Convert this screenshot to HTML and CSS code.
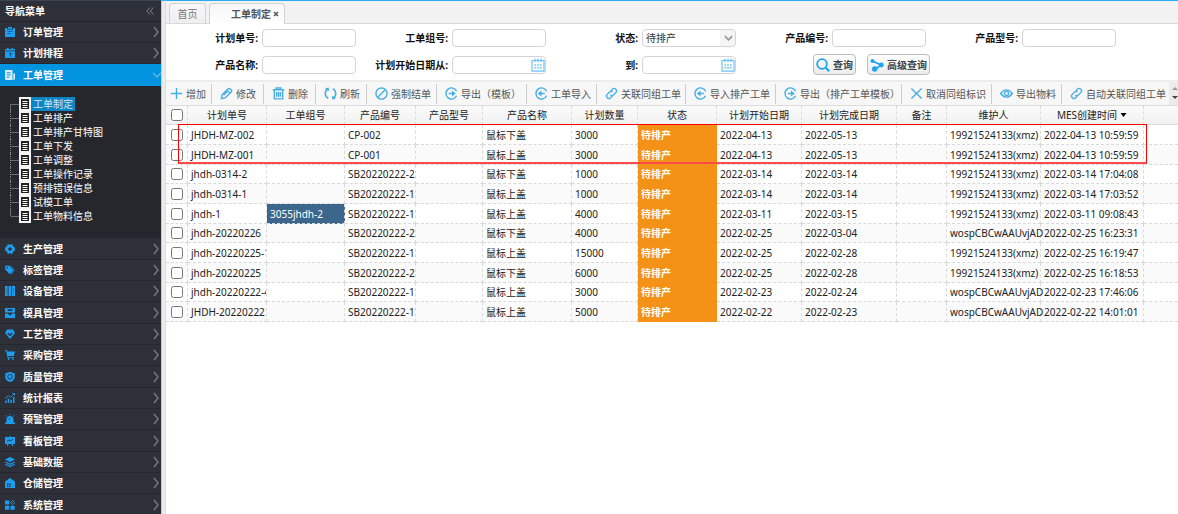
FILE: index.html
```html
<!DOCTYPE html>
<html lang="zh-CN">
<head>
<meta charset="utf-8">
<title>工单制定</title>
<link rel="stylesheet" href="styles.css">
</head>
<body>
<svg class="sprite" aria-hidden="true">
  <symbol id="chev" viewBox="0 0 6 12"><path d="M1 1l4 5-4 5" fill="none" stroke="currentColor" stroke-width="1.5"/></symbol>
  <symbol id="doc" viewBox="0 0 12 14"><rect x="1" y="1" width="10" height="12" fill="#222" stroke="#f4f4f4" stroke-width="2"/><path d="M3.500 4.500h5M3.500 6.500h5M3.500 8.500h5M3.500 10.500h5" stroke="#fff" stroke-width="1"/></symbol>
  <symbol id="m-order" viewBox="0 0 10 10"><path d="M0 1h2v1.500h6V1h2v9H0z"/><path d="M3 0h4v1.800H3z"/><path d="M2.500 4.500h5M2.500 6.500h3" stroke="#17608f" stroke-width=".9"/></symbol>
  <symbol id="m-plan" viewBox="0 0 10 10"><path d="M0 1h2V0h1.500v1h3V0H8v1h2v1.500H0zM0 3.300h10V10H0z"/><path d="M4 5h1.300v3.500M6.500 5.500h1" fill="none" stroke="#17476a" stroke-width="1"/></symbol>
  <symbol id="m-work" viewBox="0 0 10 10"><path d="M0 0h7.500v10H1.200Q0 10 0 8.800zM8.300 3.500H10v5Q10 10 8.300 10z"/><path d="M1.700 2.800h4M1.700 5h4M1.700 7.200h2.500" stroke="#1593da" stroke-width="1"/></symbol>
  <symbol id="m-gear" viewBox="0 0 10 10"><path fill-rule="evenodd" d="M3.500 0l1.500.9L6.500 0l1.300.8v1.500l1.700.7.5 2-.5 2-1.700.7v1.500L6.500 10 5 9.100 3.500 10l-1.300-.8V7.700L.5 7 0 5l.5-2 1.700-.7V.8zM5 3.200A1.800 1.800 0 1 0 5 6.800 1.800 1.800 0 1 0 5 3.200z"/></symbol>
  <symbol id="m-tag" viewBox="0 0 10 10"><path d="M0 .8L4 .5l4.500 4.700-3.700 4L.3 4.500z"/><path d="M5.500.8l4 4.200-3.300 4.300" fill="none" stroke="currentColor" stroke-width=".8"/><circle cx="2.200" cy="2.600" r=".8" fill="#2e3039"/></symbol>
  <symbol id="m-device" viewBox="0 0 10 10"><path d="M0 0h2.700v10H0zM3.500 0h2.700v10H3.500zM7 0h3v10H7z"/><path d="M1.350 2v6M8.500 2v6" stroke="#1974a9" stroke-width=".7"/></symbol>
  <symbol id="m-mold" viewBox="0 0 10 10"><path d="M0 0h10v4.500H0zM0 5.500h3l1 1.700h2l1-1.700h3V10H0z"/><path d="M2 1.200h6L6.500 3h-3z" fill="#2e3039"/></symbol>
  <symbol id="m-craft" viewBox="0 0 10 10"><path d="M2 .5h6L10 4l-5 6-5-6z"/><path d="M2.800 4L5 6.500 7.200 4" fill="none" stroke="#2e3039" stroke-width="1.200"/></symbol>
  <symbol id="m-cart" viewBox="0 0 10 10"><path d="M0 0h1.800l.5 1.500H10L8.800 6H3.200l.2.900H9v.9H2.500L1.200.9H0z"/><circle cx="3.700" cy="9" r=".9"/><circle cx="8" cy="9" r=".9"/></symbol>
  <symbol id="m-quality" viewBox="0 0 10 10"><path d="M5 0l4.700 1.300v4Q9.500 8.800 5 10 .5 8.800.3 5.300v-4z"/><circle cx="5" cy="4.800" r="2.300" fill="none" stroke="#2e3039" stroke-width=".9"/></symbol>
  <symbol id="m-chart" viewBox="0 0 10 10"><path d="M0 7.500h1.500V10H0zM2.700 5.500h1.500V10H2.700zM5.300 6.700h1.500V10H5.300zM8 4h1.500v6H8z"/><path d="M0 5.500l3.500-3L5.500 4.500 9.500.7M7.300.5h2.200v2" fill="none" stroke="currentColor" stroke-width=".9"/></symbol>
  <symbol id="m-alarm" viewBox="0 0 10 10"><path d="M1.500 8.500V5.500a3.500 3.500 0 0 1 7 0v3H10V10H0V8.500z"/><path d="M5 0v1.300M.5 1.500l1.200 1M9.500 1.500l-1.200 1" stroke="currentColor" stroke-width=".9"/><path d="M5 4.300Q3.800 4.800 3.700 6" fill="none" stroke="#2e3039" stroke-width=".6"/></symbol>
  <symbol id="m-board" viewBox="0 0 10 10"><path d="M0 1h4.500V0h1v1H10v7H7.500l.8 2h-1L6.300 8H3.700l-1 2h-1l.8-2H0z"/><path d="M2 5.300L4 4l1.500 1L8 3.300" fill="none" stroke="#2e3039" stroke-width=".9"/></symbol>
  <symbol id="m-layers" viewBox="0 0 10 10"><path d="M5 0l5 2.500L5 5 0 2.500z"/><path d="M.2 5L5 7.300 9.800 5M.2 7.300L5 9.600l4.800-2.300" fill="none" stroke="currentColor" stroke-width="1.100"/></symbol>
  <symbol id="m-store" viewBox="0 0 10 10"><path d="M5 0l5 3.500V10H0V3.500z"/><path d="M2 5.500h1.500V7H2zM4.300 5.500h1.500V7H4.300zM2 7.800h1.500v1.300H2zM4.300 7.800h1.500v1.300H4.300z" fill="#2e3039"/></symbol>
  <symbol id="m-system" viewBox="0 0 10 10"><path d="M0 .5h4.200v4H0zM0 5.700h4.200v4H0zM5.500 5.700h4.200v4H5.500z"/><path d="M7.600.5l2 2-2 2-2-2z" fill="none" stroke="currentColor"/></symbol>
  <symbol id="plus" viewBox="0 0 14 14"><path d="M7 1v12M1 7h12"/></symbol>
  <symbol id="pencil" viewBox="0 0 14 14"><path d="M1.500 12.500l.8-4 6.500-6.500q1-1 2 0l1.300 1.300q1 1 0 2L5.500 11.800zM7.500 3.500l3 3M4 8.500L7.500 5"/></symbol>
  <symbol id="trash" viewBox="0 0 14 14"><path d="M.8 3h12.400M4.500 2.800V1h5v1.800M2.500 3.500v9.300h9V3.500M5 5.500v5M7 5.500v5M9 5.500v5"/></symbol>
  <symbol id="refresh" viewBox="0 0 14 14"><path d="M4.500 12.200A6 6 0 0 1 4 2M9.500 1.800A6 6 0 0 1 10 12M1.800 2.300L4.300 1.700 4.800 4M12.200 11.700l-2.500.6-.5-2.300" stroke-width="1.700"/></symbol>
  <symbol id="ban" viewBox="0 0 14 14"><circle cx="7" cy="7" r="6"/><path d="M3.300 10.700l7.400-7.400"/></symbol>
  <symbol id="out" viewBox="0 0 14 14"><path d="M12.500 4.500A6 6 0 1 0 12.500 9.500M4 7h6"/><path d="M7.500 3.800L11.500 7l-4 3.200z" fill="currentColor" stroke="none"/></symbol>
  <symbol id="in" viewBox="0 0 14 14"><path d="M12.500 4.500A6 6 0 1 0 12.500 9.500M10.500 7H5"/><path d="M7 3.800L3 7l4 3.200z" fill="currentColor" stroke="none"/></symbol>
  <symbol id="link" viewBox="0 0 14 14"><path d="M6.200 4.200l2-2q1.700-1.500 3.400.2t.2 3.400L9 8.600q-1.600 1.400-3.200 0M7.800 9.800l-2 2q-1.700 1.500-3.400-.2t-.2-3.400L5 5.400q1.600-1.400 3.200 0"/></symbol>
  <symbol id="cross" viewBox="0 0 14 14"><path d="M1.500 1.500l11 11M12.500 1.500l-11 11"/></symbol>
  <symbol id="eye" viewBox="0 0 14 14"><path d="M.6 7Q7-.8 13.400 7 7 14.800.6 7z"/><circle cx="7" cy="7" r="2.300"/></symbol>
  <symbol id="cal" viewBox="0 0 14 14"><path d="M1 2.500h12v10.700H1zM4 .5v3.700M7 .5v3.700M10 .5v3.700" fill="none" stroke="currentColor" stroke-width="1.200"/><path d="M3.500 7h7M3.500 9.800h7" stroke="currentColor" stroke-width="1.500" stroke-dasharray="1.600 1.100"/></symbol>
  <symbol id="search" viewBox="0 0 14 14"><path d="M9.800 9.800l3.400 3.400" stroke-width="2.200"/><circle cx="6" cy="6" r="4.800" stroke-width="1.800"/></symbol>
  <symbol id="share" viewBox="0 0 14 14"><path d="M2.500 3l8.500 4-6 4.500" stroke-width="1.600"/><g fill="currentColor" stroke="none"><circle cx="2.500" cy="3" r="2"/><circle cx="11.300" cy="7" r="2.400"/><circle cx="4.700" cy="11" r="2.700"/></g></symbol>
</svg>
<div class="app">
  <nav class="side" aria-label="导航菜单">
    <div class="side-head"><span>导航菜单</span><svg class="fold" viewBox="0 0 8 8"><path d="M4 .5L.7 4 4 7.500M7.500.5L4.200 4l3.300 3.500" fill="none" stroke="currentColor"/></svg></div>
    <div class="group">
      <button class="item"><svg class="mi"><use href="#m-order"/></svg><span>订单管理</span><svg class="chev"><use href="#chev"/></svg></button>
      <button class="item"><svg class="mi"><use href="#m-plan"/></svg><span>计划排程</span><svg class="chev"><use href="#chev"/></svg></button>
      <button class="item active"><svg class="mi"><use href="#m-work"/></svg><span>工单管理</span><svg class="down" viewBox="0 0 8 6"><path d="M0 1l4 4 4-4" fill="none" stroke="currentColor" stroke-width="1.200"/></svg></button>
    </div>
    <ul class="tree">
      <li><a class="on" href="#"><svg class="doc"><use href="#doc"/></svg>工单制定</a></li>
      <li><a href="#"><svg class="doc"><use href="#doc"/></svg>工单排产</a></li>
      <li><a href="#"><svg class="doc"><use href="#doc"/></svg>工单排产甘特图</a></li>
      <li><a href="#"><svg class="doc"><use href="#doc"/></svg>工单下发</a></li>
      <li><a href="#"><svg class="doc"><use href="#doc"/></svg>工单调整</a></li>
      <li><a href="#"><svg class="doc"><use href="#doc"/></svg>工单操作记录</a></li>
      <li><a href="#"><svg class="doc"><use href="#doc"/></svg>预排错误信息</a></li>
      <li><a href="#"><svg class="doc"><use href="#doc"/></svg>试模工单</a></li>
      <li><a href="#"><svg class="doc"><use href="#doc"/></svg>工单物料信息</a></li>
    </ul>
    <div class="group more">
      <button class="item"><svg class="mi"><use href="#m-gear"/></svg><span>生产管理</span><svg class="chev"><use href="#chev"/></svg></button>
      <button class="item"><svg class="mi"><use href="#m-tag"/></svg><span>标签管理</span><svg class="chev"><use href="#chev"/></svg></button>
      <button class="item"><svg class="mi"><use href="#m-device"/></svg><span>设备管理</span><svg class="chev"><use href="#chev"/></svg></button>
      <button class="item"><svg class="mi"><use href="#m-mold"/></svg><span>模具管理</span><svg class="chev"><use href="#chev"/></svg></button>
      <button class="item"><svg class="mi"><use href="#m-craft"/></svg><span>工艺管理</span><svg class="chev"><use href="#chev"/></svg></button>
      <button class="item"><svg class="mi"><use href="#m-cart"/></svg><span>采购管理</span><svg class="chev"><use href="#chev"/></svg></button>
      <button class="item"><svg class="mi"><use href="#m-quality"/></svg><span>质量管理</span><svg class="chev"><use href="#chev"/></svg></button>
      <button class="item"><svg class="mi"><use href="#m-chart"/></svg><span>统计报表</span><svg class="chev"><use href="#chev"/></svg></button>
      <button class="item"><svg class="mi"><use href="#m-alarm"/></svg><span>预警管理</span><svg class="chev"><use href="#chev"/></svg></button>
      <button class="item"><svg class="mi"><use href="#m-board"/></svg><span>看板管理</span><svg class="chev"><use href="#chev"/></svg></button>
      <button class="item"><svg class="mi"><use href="#m-layers"/></svg><span>基础数据</span><svg class="chev"><use href="#chev"/></svg></button>
      <button class="item"><svg class="mi"><use href="#m-store"/></svg><span>仓储管理</span><svg class="chev"><use href="#chev"/></svg></button>
      <button class="item"><svg class="mi"><use href="#m-system"/></svg><span>系统管理</span><svg class="chev"><use href="#chev"/></svg></button>
    </div>
  </nav>
  <div class="splitter"></div>
  <main class="main">
    <div class="tabs">
      <button class="tab">首页</button>
      <button class="tab current">工单制定<svg class="close" viewBox="0 0 6 6"><path d="M1 1l4 4M5 1L1 5" stroke="currentColor" stroke-width="1.500"/></svg></button>
    </div>
    <form class="query">
      <div class="field"><label for="f1">计划单号:</label><input id="f1" type="text"></div>
      <div class="field"><label for="f2">工单组号:</label><input id="f2" type="text"></div>
      <div class="field"><label for="f3">状态:</label><span class="box"><select id="f3"><option>待排产</option></select><svg class="arrow" viewBox="0 0 10 6"><path d="M1 1l4 4 4-4" fill="none" stroke="currentColor" stroke-width="2"/></svg></span></div>
      <div class="field"><label for="f4">产品编号:</label><input id="f4" type="text"></div>
      <div class="field"><label for="f5">产品型号:</label><input id="f5" type="text"></div>
      <div class="field"><label for="f6">产品名称:</label><input id="f6" type="text"></div>
      <div class="field"><label for="f7">计划开始日期从:</label><span class="box"><input id="f7" type="text"><svg class="cal"><use href="#cal"/></svg></span></div>
      <div class="field"><label for="f8">到:</label><span class="box"><input id="f8" type="text"><svg class="cal"><use href="#cal"/></svg></span></div>
      <div class="actions">
        <button type="button" class="btn"><svg class="ic"><use href="#search"/></svg>查询</button>
        <button type="button" class="btn"><svg class="ic"><use href="#share"/></svg>高级查询</button>
      </div>
    </form>
    <div class="toolbar">
      <div class="tools">
        <button><svg class="ic"><use href="#plus"/></svg>增加</button>
        <button><svg class="ic"><use href="#pencil"/></svg>修改</button>
        <button><svg class="ic"><use href="#trash"/></svg>删除</button>
        <button><svg class="ic"><use href="#refresh"/></svg>刷新</button>
        <button><svg class="ic"><use href="#ban"/></svg>强制结单</button>
        <button><svg class="ic"><use href="#out"/></svg>导出（模板）</button>
        <button><svg class="ic"><use href="#in"/></svg>工单导入</button>
        <button><svg class="ic"><use href="#link"/></svg>关联同组工单</button>
        <button><svg class="ic"><use href="#in"/></svg>导入排产工单</button>
        <button><svg class="ic"><use href="#out"/></svg>导出（排产工单模板）</button>
        <button><svg class="ic"><use href="#cross"/></svg>取消同组标识</button>
        <button><svg class="ic"><use href="#eye"/></svg>导出物料</button>
        <button><svg class="ic"><use href="#link"/></svg>自动关联同组工单</button>
      </div>
      <div class="spin"><svg viewBox="0 0 6 14"><path d="M0 4l3-3 3 3z" fill="#999"/><path d="M0 10h6l-3 3z" fill="#444"/></svg></div>
    </div>
    <div class="grid">
      <table>
        <colgroup><col class="c22"><col class="c79"><col class="c78"><col class="c71"><col class="c67"><col class="c89"><col class="c66"><col class="c79"><col class="c85"><col class="c95"><col class="c50"><col class="c94"><col class="c103"><col></colgroup>
        <thead><tr><th><input type="checkbox" aria-label="全选"></th><th>计划单号</th><th>工单组号</th><th>产品编号</th><th>产品型号</th><th>产品名称</th><th>计划数量</th><th>状态</th><th>计划开始日期</th><th>计划完成日期</th><th>备注</th><th>维护人</th><th>MES创建时间<svg class="sort" viewBox="0 0 6 4"><path d="M0 0h6L3 4z"/></svg></th><th></th></tr></thead>
        <tbody>
          <tr><td><input type="checkbox" aria-label="选择"></td><td class="no">JHDH-MZ-002</td><td></td><td>CP-002</td><td></td><td>鼠标下盖</td><td>3000</td><td class="wait">待排产</td><td>2022-04-13</td><td>2022-05-13</td><td></td><td>19921524133(xmz)</td><td>2022-04-13 10:59:59</td><td></td></tr>
          <tr><td><input type="checkbox" aria-label="选择"></td><td class="no">JHDH-MZ-001</td><td></td><td>CP-001</td><td></td><td>鼠标上盖</td><td>3000</td><td class="wait">待排产</td><td>2022-04-13</td><td>2022-05-13</td><td></td><td>19921524133(xmz)</td><td>2022-04-13 10:59:59</td><td></td></tr>
          <tr><td><input type="checkbox" aria-label="选择"></td><td class="no">jhdh-0314-2</td><td></td><td>SB20220222-2</td><td></td><td>鼠标下盖</td><td>1000</td><td class="wait">待排产</td><td>2022-03-14</td><td>2022-03-14</td><td></td><td>19921524133(xmz)</td><td>2022-03-14 17:04:08</td><td></td></tr>
          <tr><td><input type="checkbox" aria-label="选择"></td><td class="no">jhdh-0314-1</td><td></td><td>SB20220222-1</td><td></td><td>鼠标上盖</td><td>1000</td><td class="wait">待排产</td><td>2022-03-14</td><td>2022-03-14</td><td></td><td>19921524133(xmz)</td><td>2022-03-14 17:03:52</td><td></td></tr>
          <tr><td><input type="checkbox" aria-label="选择"></td><td class="no">jhdh-1</td><td class="picked">3055jhdh-2</td><td>SB20220222-1</td><td></td><td>鼠标上盖</td><td>4000</td><td class="wait">待排产</td><td>2022-03-11</td><td>2022-03-15</td><td></td><td>19921524133(xmz)</td><td>2022-03-11 09:08:43</td><td></td></tr>
          <tr><td><input type="checkbox" aria-label="选择"></td><td class="no">jhdh-20220226</td><td></td><td>SB20220222-2</td><td></td><td>鼠标下盖</td><td>4000</td><td class="wait">待排产</td><td>2022-02-25</td><td>2022-03-04</td><td></td><td>wospCBCwAAUvjAD</td><td>2022-02-25 16:23:31</td><td></td></tr>
          <tr><td><input type="checkbox" aria-label="选择"></td><td class="no">jhdh-20220225-1</td><td></td><td>SB20220222-1</td><td></td><td>鼠标上盖</td><td>15000</td><td class="wait">待排产</td><td>2022-02-25</td><td>2022-02-28</td><td></td><td>19921524133(xmz)</td><td>2022-02-25 16:19:47</td><td></td></tr>
          <tr><td><input type="checkbox" aria-label="选择"></td><td class="no">jhdh-20220225</td><td></td><td>SB20220222-2</td><td></td><td>鼠标下盖</td><td>6000</td><td class="wait">待排产</td><td>2022-02-25</td><td>2022-02-28</td><td></td><td>19921524133(xmz)</td><td>2022-02-25 16:18:53</td><td></td></tr>
          <tr><td><input type="checkbox" aria-label="选择"></td><td class="no">jhdh-20220222-4</td><td></td><td>SB20220222-1</td><td></td><td>鼠标上盖</td><td>3000</td><td class="wait">待排产</td><td>2022-02-23</td><td>2022-02-24</td><td></td><td>wospCBCwAAUvjAD</td><td>2022-02-23 17:46:06</td><td></td></tr>
          <tr><td><input type="checkbox" aria-label="选择"></td><td class="no">JHDH-20220222</td><td></td><td>SB20220222-1</td><td></td><td>鼠标上盖</td><td>5000</td><td class="wait">待排产</td><td>2022-02-22</td><td>2022-02-23</td><td></td><td>wospCBCwAAUvjAD</td><td>2022-02-22 14:01:01</td><td></td></tr>
        </tbody>
      </table>
      <div class="mark"></div>
    </div>
  </main>
</div>
</body>
</html>
```
FILE: styles.css
```css
* { box-sizing: border-box; }
body, button, input, select { font: 10px/14px "Noto Sans", "Noto Sans CJK SC", sans-serif; }
body { margin: 0; color: #222; background: #fff; }
button { margin: 0; padding: 0; border: 0; background: none; color: inherit; white-space: nowrap; }
svg { display: block; flex: none; }
.sprite { position: absolute; width: 0; height: 0; }
.app { display: flex; min-height: 100vh; overflow: hidden; }

.side { flex: none; display: flex; flex-direction: column; width: 161px; height: 100vh; overflow: hidden; background: #25272d; color: #fff; font-weight: bold; }
.side-head { flex: none; display: flex; align-items: center; justify-content: space-between; height: 22px; padding: 0 7px 0 5px; background: #2e3039; border-top: 1px solid #3c4352; border-bottom: 1px solid #23252b; }
.fold { width: 8px; height: 8px; color: #858893; }
.group { flex: none; }
.item { display: flex; align-items: center; width: 100%; height: 21px; padding: 0 2px 0 5px; background: #2e3039; border-bottom: 1px solid #24262c; color: #fff; font-weight: bold; text-align: left; }
.more .item:nth-child(3n+1) { height: 22px; }
.item span { flex: 1; padding-left: 8px; }
.mi { width: 10px; height: 10px; color: #1b9df0; fill: currentColor; }
.chev { width: 6px; height: 12px; color: #737681; }
.item.active { height: 22px; padding-right: 0; background: #0394df; border-color: #0394df; }
.active .mi { color: #dcecfb; }
.down { width: 8px; height: 6px; color: #6fbde9; }
.tree { flex: none; margin: 0; padding: 11px 0 15px 10px; list-style: none; font-weight: normal; }
.tree li { display: flex; height: 14px; padding-left: 8px; background: linear-gradient(90deg, #6b6d72, #6b6d72) 0 7px / 8px 1px no-repeat; border-left: 1px dotted #85878b; }
.tree li:first-child { border-image: linear-gradient(transparent 50%, #6b6d72 50%) 1; }
.tree li:last-child { border-image: linear-gradient(#6b6d72 50%, transparent 50%) 1; }
.tree a { display: flex; gap: 2px; padding-right: 2px; color: #fff; text-decoration: none; }
.tree a.on { background: #0b86c6; color: #d5eaf6; }
.doc { width: 12px; height: 14px; }

.splitter { flex: none; width: 5px; background: #ebebeb; border-right: 1px solid #ddd; border-left: 1px solid #c9c9cb; border-top: 1px solid #29abf2; }
.main { flex: 1; min-width: 0; }
.tabs { display: flex; align-items: flex-end; gap: 3px; height: 24px; padding-left: 3px; background: #f2f2f2; border-top: 1px solid #29abf2; border-bottom: 1px solid #d8d8d8; }
.tab { width: 37px; height: 20px; border: 1px solid #d3d3d3; border-bottom: 0; border-radius: 4px 4px 0 0; background: linear-gradient(#f8f8f8, #eee); color: #777; }
.tab.current { display: flex; align-items: center; gap: 2px; width: 76px; height: 21px; margin-bottom: -1px; padding-left: 21px; background: linear-gradient(#f6f6f6, #fff); color: #555; font-weight: bold; }
.close { width: 6px; height: 6px; }

.query { display: grid; grid-template-columns: repeat(5, 190px); row-gap: 6px; padding: 3px 0 5px; }
.field { display: flex; align-items: center; justify-content: flex-end; gap: 4px; height: 21px; color: #111; font-weight: bold; }
.field input, .field select { width: 94px; height: 18px; padding: 0 3px; border: 1px solid #d4d4d4; border-radius: 4px; background: #fff; outline: 0; color: #333; appearance: none; }
.field select { background: linear-gradient(#f5f5f5, #f5f5f5) right / 15px no-repeat #fff; }
.box { display: flex; position: relative; }
.arrow { position: absolute; right: 3px; top: 6px; width: 9px; height: 6px; color: #999; pointer-events: none; }
.cal { position: absolute; right: 1px; top: 2px; width: 14px; height: 14px; color: #6cc2f6; }
.actions { grid-column: span 2; display: flex; gap: 11px; padding-left: 77px; }
.ic { width: 13px; height: 13px; fill: none; stroke: currentColor; stroke-width: 1.500; color: #48aee6; }
.btn { display: flex; align-items: center; gap: 3px; height: 21px; padding: 0 2px; border: 1px solid #bbb; border-radius: 4px; background: linear-gradient(#fff, #ececec); color: #444; font-weight: bold; }
.btn .ic { width: 14px; height: 14px; color: #19a5f3; }

.toolbar { display: flex; height: 26px; background: #f7f7f7; border-top: 2px solid #ededed; border-bottom: 1px solid #ddd; color: #555; }
.tools { flex: 1; min-width: 0; display: grid; grid-template-columns: 46fr 52fr 52fr 51fr 70fr 90fr 70fr 89fr 90fr 126fr 90fr 70fr 107fr; align-items: center; }
.tools button { display: flex; align-items: center; gap: 3px; min-width: 0; height: 20px; padding-left: 8px; border-right: 1px solid #ccc; }
.tools button:first-child { padding-left: 4px; }
.tools button:last-child { border: 0; }
.spin { flex: none; width: 9px; padding-top: 4px; background: #ebebeb; }
.spin svg { width: 6px; height: 14px; margin-left: 3px; }

.grid { position: relative; }
table { width: 100%; table-layout: fixed; border-collapse: separate; border-spacing: 0; }
.c22 { width: 22px; } .c50 { width: 50px; } .c66 { width: 66px; } .c67 { width: 67px; }
.c71 { width: 71px; } .c78 { width: 78px; } .c79 { width: 79px; } .c85 { width: 85px; }
.c89 { width: 89px; } .c94 { width: 94px; } .c95 { width: 95px; } .c103 { width: 103px; }
th { height: 19px; padding: 0; background: linear-gradient(#fbfbfb, #f1f1f1); border-right: 1px dashed #d9d9d9; border-bottom: 1px solid #ddd; font-weight: normal; white-space: nowrap; }
td { height: 20px; padding: 0 0 0 3px; border-right: 1px dashed #d9d9d9; border-bottom: 1px dashed #d9d9d9; white-space: nowrap; }
td.no { overflow: hidden; }
tbody tr:nth-child(3n) td { height: 19px; }
tbody tr:nth-child(even) { background: #fafafa; }
th:first-child, td:first-child { padding: 0; }
th:last-child, td:last-child { border-right: 0; }
th input, td input { display: block; width: 12px; height: 12px; margin: 0 0 0 5px; }
.sort { display: inline-block; width: 7px; height: 4px; margin: 0 0 2px 3px; }
td.wait { background: #f39217; border-color: #f39217; color: #fff; font-weight: bold; }
td.picked { background: #3c668b; color: #fff; }
.mark { position: absolute; top: 18px; left: 12px; right: 31px; height: 40px; border: 1px solid #f00; border-bottom: 2px solid #ff4a4a; pointer-events: none; }
```
